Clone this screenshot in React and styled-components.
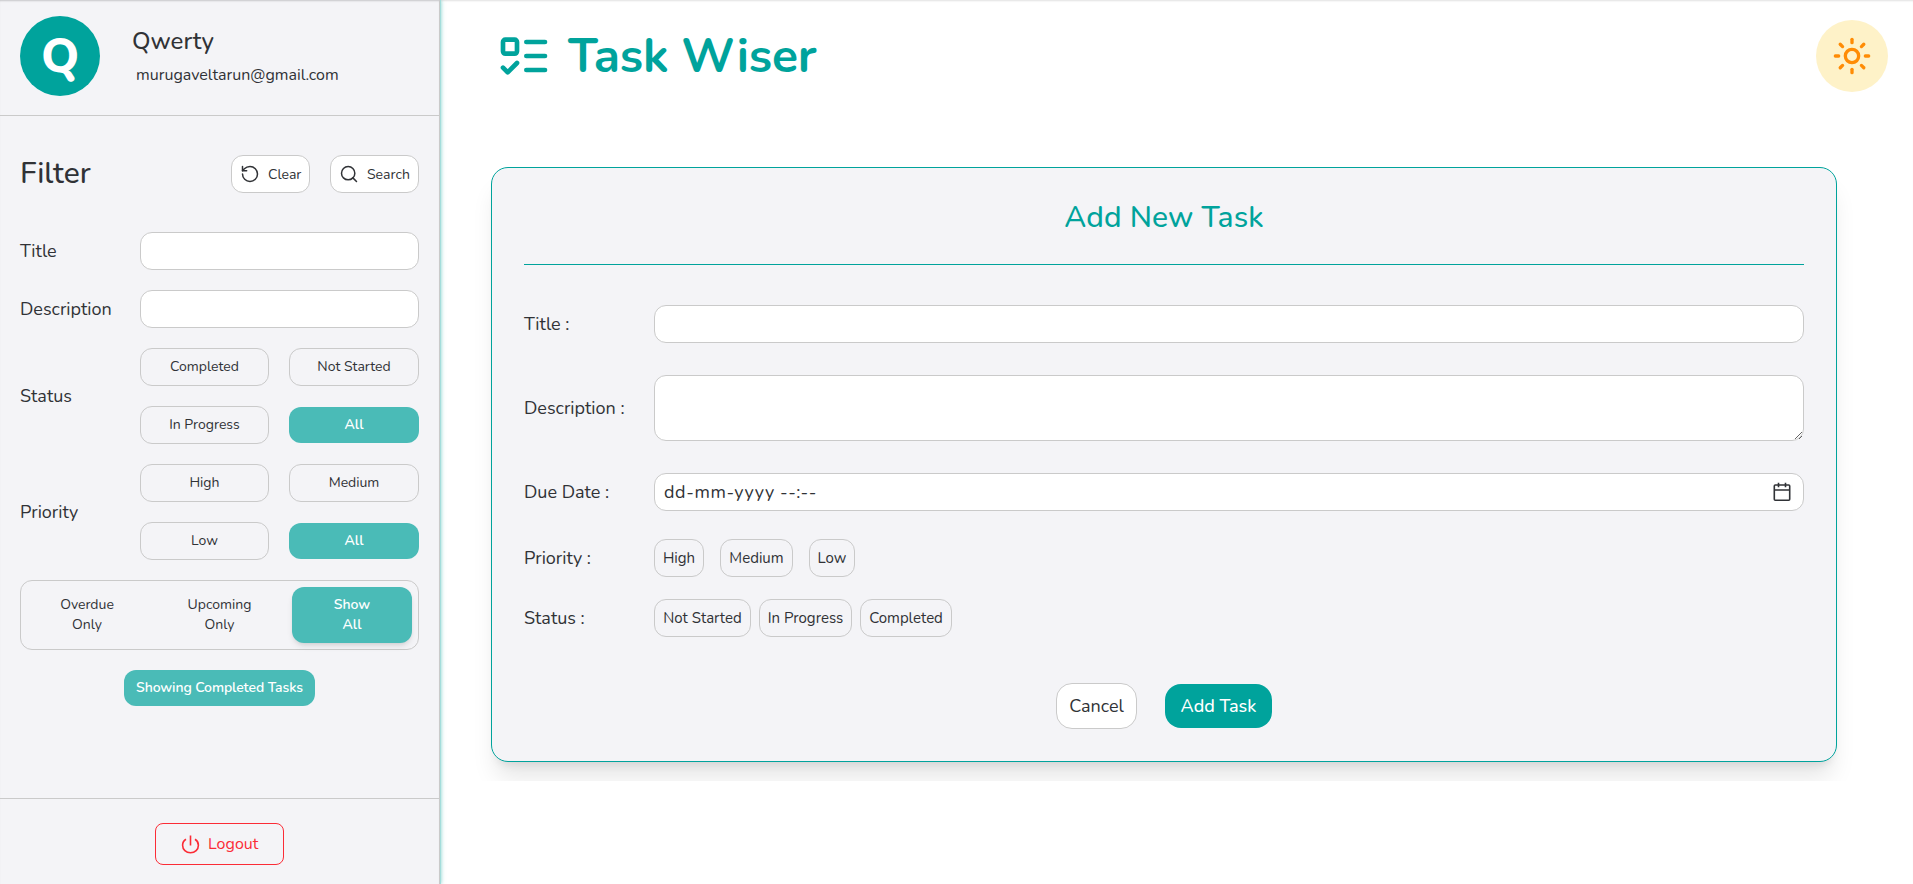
import React, { useState } from 'react';
import styled, { createGlobalStyle, css } from 'styled-components';
import { RotateCcw, Search, Sun } from 'lucide-react';

const color = {
  accent: '#00a39c',
  accentSoft: '#4abbb7',
  panel: '#f4f4f7',
  line: '#cacaca',
  text: '#303236',
  danger: '#fb2c36',
};

const GlobalStyle = createGlobalStyle`
  *, *::before, *::after { box-sizing: border-box; }
  body {
    margin: 0;
    background: #fff;
    color: ${color.text};
    font-family: Nunito, Lato, "Open Sans", sans-serif;
    font-size: 18px;
    overflow: hidden;
  }
  button, input, textarea { font: inherit; color: inherit; }
`;

const Page = styled.div`
  display: flex;
  height: 100vh;
  box-shadow: inset 0 2px 2px -1px #0000001f;
`;

const Label = styled.span`
  letter-spacing: ${(p) => p.$track ?? 0}px;
  white-space: nowrap;
`;

/* ---------- sidebar ---------- */

const Sidebar = styled.aside`
  position: relative;
  display: flex;
  flex-direction: column;
  flex: none;
  width: 440px;
  background: ${color.panel};
  border-right: 1px solid ${color.line};
  box-shadow: 1px 0 0 #a3dddb, 1px 0 4px ${color.accent}80, inset 0 2px 2px -1px #00000030;
`;

const Profile = styled.header`
  display: flex;
  gap: 32px;
  height: 116px;
  padding: 16px 20px 0;
  border-bottom: 1px solid ${color.line};
`;

const Avatar = styled.div`
  width: 80px;
  height: 80px;
  border-radius: 50%;
  background: ${color.accent};
  color: #fff;
  font-size: 48px;
  font-weight: 800;
  line-height: 80px;
  text-align: center;
`;

const Identity = styled.div`
  padding-top: 9px;
`;

const UserName = styled.div`
  font-size: 24px;
  font-weight: 500;
  line-height: 32px;
`;

const Email = styled.div`
  padding: 6px 0 0 4px;
  font-size: 16px;
  line-height: 24px;
`;

const Filters = styled.section`
  flex: 1;
  display: flex;
  flex-direction: column;
  gap: 20px;
  padding: 39px 20px 0;
`;

const FilterHead = styled.div`
  display: flex;
  align-items: center;
  height: 38px;
  margin-bottom: 19px;
`;

const FilterTitle = styled.h2`
  flex: 1;
  margin: 0;
  font-size: 30px;
  font-weight: 500;
  line-height: 36px;
`;

const IconButton = styled.button`
  display: flex;
  align-items: center;
  gap: 8px;
  width: ${(p) => p.$width}px;
  height: 38px;
  margin-left: 20px;
  padding: 0 0 0 8px;
  border: 1px solid ${color.line};
  border-radius: 12px;
  background: #fff;
  font-size: 14px;
`;

const FilterRow = styled.div`
  display: grid;
  grid-template-columns: 120px 1fr;
  align-items: center;
`;

const Input = styled.input`
  width: 100%;
  height: 38px;
  padding: 0 10px;
  border: 1px solid ${color.line};
  border-radius: 12px;
  background: #fff;
  outline: none;
`;

const OptionGrid = styled.div`
  display: grid;
  grid-template-columns: 129px 1fr;
  gap: 20px;
`;

const activeFill = css`
  border: 0;
  background: ${color.accentSoft};
  color: #fff;
  font-weight: 600;
`;

const Option = styled.button`
  height: 38px;
  padding: 0 0 1px;
  border: 1px solid ${color.line};
  border-radius: 12px;
  background: transparent;
  font-size: 14px;
  ${(p) =>
    p.$active &&
    css`
      ${activeFill}
      height: 36px;
      align-self: center;
    `}
`;

const Segmented = styled.div`
  display: flex;
  justify-content: space-between;
  height: 70px;
  padding: 6px;
  border: 1px solid ${color.line};
  border-radius: 12px;
`;

const Segment = styled.button`
  width: 120px;
  height: 56px;
  padding: 0 35px 1px;
  border: 0;
  border-radius: 12px;
  background: transparent;
  font-size: 14px;
  line-height: 20px;
  display: flex;
  flex-direction: column;
  align-items: center;
  justify-content: center;
  ${(p) =>
    p.$active &&
    css`
      ${activeFill}
      box-shadow: 0 4px 6px -1px #0000001a, 0 2px 4px -2px #0000001a;
    `}
`;

const CompletedToggle = styled.button`
  align-self: center;
  width: 191px;
  height: 36px;
  padding: 0 0 1px;
  border-radius: 12px;
  font-size: 14px;
  letter-spacing: -0.1px;
  ${activeFill}
`;

const SidebarFooter = styled.footer`
  display: flex;
  justify-content: center;
  height: 86px;
  padding-top: 24px;
  border-top: 1px solid ${color.line};
`;

const LogoutButton = styled.button`
  display: flex;
  align-items: center;
  gap: 7px;
  width: 129px;
  height: 42px;
  padding: 0 0 0 24px;
  border: 1px solid ${color.danger};
  border-radius: 8px;
  background: transparent;
  color: ${color.danger};
  font-size: 16px;
`;

/* ---------- main ---------- */

const Main = styled.main`
  flex: 1;
  min-width: 0;
`;

const TopBar = styled.header`
  display: flex;
  align-items: center;
  justify-content: space-between;
  height: 112px;
  padding: 0 25px 0 56px;
`;

const Brand = styled.h1`
  display: flex;
  align-items: center;
  gap: 16px;
  margin: 0;
  color: ${color.accent};
  font-size: 48px;
  font-weight: 700;
  line-height: 56px;
`;

const ThemeButton = styled.button`
  display: grid;
  place-items: center;
  width: 72px;
  height: 72px;
  padding: 0;
  border: 0;
  border-radius: 50%;
  background: #fef2c8;
  color: #ff8c05;
`;

const FormArea = styled.div`
  overflow: hidden;
  padding: 55px 76px 19px 51px;
`;

const Card = styled.form`
  height: 595px;
  padding: 0 32px;
  border: 1px solid ${color.accent};
  border-radius: 17px;
  background: ${color.panel};
  box-shadow: 0 20px 25px -5px #0000001a, 0 8px 10px -6px #0000001a;
`;

const CardTitle = styled.h2`
  height: 97px;
  margin: 0 0 40px;
  padding-top: 31px;
  border-bottom: 1px solid ${color.accent};
  color: ${color.accent};
  font-size: 30px;
  font-weight: 500;
  line-height: 38px;
  letter-spacing: 0.15px;
  text-align: center;
`;

const Field = styled.div`
  display: grid;
  grid-template-columns: 130px 1fr;
  align-items: center;
  margin-bottom: ${(p) => p.$space}px;
`;

const TextArea = styled.textarea`
  display: block;
  width: 100%;
  height: 66px;
  border: 1px solid ${color.line};
  border-radius: 12px;
  background: #fff;
  resize: vertical;
`;

const DateBox = styled.div`
  display: flex;
  align-items: center;
  justify-content: space-between;
  height: 38px;
  padding: 0 12px 0 9px;
  border: 1px solid ${color.line};
  border-radius: 12px;
  background: #fff;
`;

const Choices = styled.div`
  display: flex;
  gap: ${(p) => p.$gap}px;
`;

const Choice = styled.button`
  width: ${(p) => p.$width}px;
  height: 38px;
  padding: 0;
  border: 1px solid ${color.line};
  border-radius: 12px;
  background: transparent;
  font-size: 15px;
`;

const Actions = styled.div`
  display: flex;
  align-items: center;
  justify-content: center;
  gap: 28px;
`;

const ActionButton = styled.button`
  width: ${(p) => (p.$primary ? 107 : 81)}px;
  height: ${(p) => (p.$primary ? 44 : 46)}px;
  padding: 0;
  border: ${(p) => (p.$primary ? '0' : `1px solid ${color.line}`)};
  border-radius: 16px;
  background: ${(p) => (p.$primary ? color.accent : '#fff')};
  color: ${(p) => (p.$primary ? '#fff' : color.text)};
  font-weight: ${(p) => (p.$primary ? 500 : 400)};
`;

/* ---------- icons ---------- */

const ListTodoIcon = () => (
  <svg width="56" height="56" viewBox="0 0 24 24" fill="none" stroke="currentColor" strokeWidth="2" strokeLinecap="round" strokeLinejoin="round">
    <rect x="3" y="5" width="6" height="6" rx="1" />
    <path d="m3 17 2 2 4-4" />
    <path d="M13 6h8" />
    <path d="M13 12h8" />
    <path d="M13 18h8" />
  </svg>
);

const PowerIcon = () => (
  <svg width="21" height="21" viewBox="0 0 21 21" fill="none" stroke="currentColor" strokeWidth="1.6">
    <path d="M10.5 1.5V11.5" />
    <path d="M6 5.3C3.6 6.8 2.6 8.9 2.6 11.2c0 4.4 3.4 7.6 7.9 7.6s7.9-3.2 7.9-7.6c0-2.3-1-4.4-3.4-5.9" />
  </svg>
);

const CalendarIcon = () => (
  <svg width="18" height="20" viewBox="0 0 18 20" fill="none" stroke="currentColor" strokeWidth="1.6">
    <rect x="1.3" y="3" width="15.4" height="15.2" rx="1" />
    <path d="M1.3 8h15.4M5.5 0.8v4.4M12.5 0.8v4.4" />
  </svg>
);

/* ---------- data ---------- */

const statusOptions = ['Completed', 'Not Started', 'In Progress', 'All'];
const priorityOptions = ['High', 'Medium', 'Low', 'All'];
const ranges = [
  ['Overdue', 'Only'],
  ['Upcoming', 'Only'],
  ['Show', 'All'],
];
const priorityChoices = [
  ['High', 50],
  ['Medium', 73],
  ['Low', 46],
];
const statusChoices = [
  ['Not Started', 97],
  ['In Progress', 93],
  ['Completed', 92],
];

const OptionGroup = ({ options }) => {
  const [selected, setSelected] = useState('All');
  return (
    <OptionGrid>
      {options.map((name) => (
        <Option key={name} $active={selected === name} onClick={() => setSelected(name)}>
          {name}
        </Option>
      ))}
    </OptionGrid>
  );
};

const ChoiceGroup = ({ choices, gap }) => (
  <Choices $gap={gap}>
    {choices.map(([name, width]) => (
      <Choice key={name} type="button" $width={width}>
        <Label>{name}</Label>
      </Choice>
    ))}
  </Choices>
);

export default function App() {
  const [range, setRange] = useState('Show');
  return (
    <>
      <GlobalStyle />
      <Page>
        <Sidebar>
          <Profile>
            <Avatar>Q</Avatar>
            <Identity>
              <UserName>Qwerty</UserName>
              <Email>murugaveltarun@gmail.com</Email>
            </Identity>
          </Profile>

          <Filters>
            <FilterHead>
              <FilterTitle>Filter</FilterTitle>
              <IconButton $width={79}>
                <RotateCcw size={20} strokeWidth={1.8} />
                <Label>Clear</Label>
              </IconButton>
              <IconButton $width={89}>
                <Search size={20} strokeWidth={1.8} />
                <Label>Search</Label>
              </IconButton>
            </FilterHead>
            <FilterRow>
              <Label>Title</Label>
              <Input />
            </FilterRow>
            <FilterRow>
              <Label>Description</Label>
              <Input />
            </FilterRow>
            <FilterRow>
              <Label>Status</Label>
              <OptionGroup options={statusOptions} />
            </FilterRow>
            <FilterRow>
              <Label>Priority</Label>
              <OptionGroup options={priorityOptions} />
            </FilterRow>
            <Segmented>
              {ranges.map(([first, second]) => (
                <Segment key={first} $active={range === first} onClick={() => setRange(first)}>
                  <Label>{first}</Label>
                  <Label>{second}</Label>
                </Segment>
              ))}
            </Segmented>
            <CompletedToggle>Showing Completed Tasks</CompletedToggle>
          </Filters>

          <SidebarFooter>
            <LogoutButton>
              <PowerIcon />
              <Label>Logout</Label>
            </LogoutButton>
          </SidebarFooter>
        </Sidebar>

        <Main>
          <TopBar>
            <Brand>
              <ListTodoIcon />
              <Label $track={-0.25}>Task Wiser</Label>
            </Brand>
            <ThemeButton aria-label="Toggle theme">
              <Sun size={40} />
            </ThemeButton>
          </TopBar>

          <FormArea>
            <Card>
              <CardTitle>Add New Task</CardTitle>
              <Field $space={32}>
                <Label>Title :</Label>
                <Input />
              </Field>
              <Field $space={32}>
                <Label>Description :</Label>
                <TextArea />
              </Field>
              <Field $space={28}>
                <Label>Due Date :</Label>
                <DateBox>
                  <Label $track={0.6}>dd-mm-yyyy --:--</Label>
                  <CalendarIcon />
                </DateBox>
              </Field>
              <Field $space={22}>
                <Label>Priority :</Label>
                <ChoiceGroup choices={priorityChoices} gap={16} />
              </Field>
              <Field $space={46}>
                <Label>Status :</Label>
                <ChoiceGroup choices={statusChoices} gap={8} />
              </Field>
              <Actions>
                <ActionButton type="button">Cancel</ActionButton>
                <ActionButton type="button" $primary>
                  Add Task
                </ActionButton>
              </Actions>
            </Card>
          </FormArea>
        </Main>
      </Page>
    </>
  );
}
